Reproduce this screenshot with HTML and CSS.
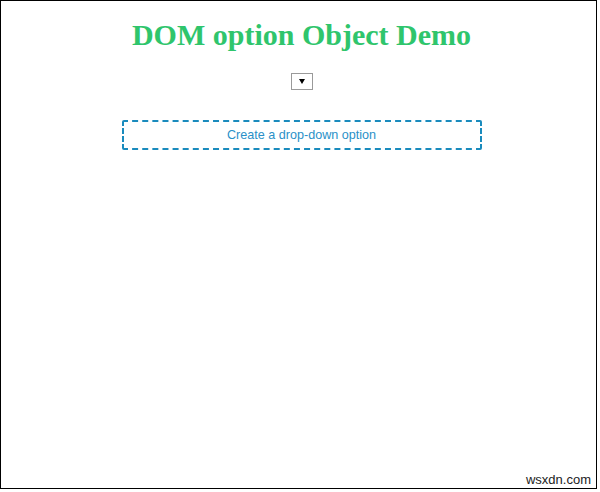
FILE: index.html
```html
<!DOCTYPE html>
<html>
<head>
<meta charset="utf-8">
<link rel="stylesheet" href="styles.css">
</head>
<body>
<div class="frame">
  <h1 class="title">DOM option Object Demo</h1>
  <div class="select-row">
    <span class="select-wrap"><select class="picker"></select></span>
  </div>
  <div class="btn-row">
    <button class="create-btn">Create a drop-down option</button>
  </div>
  <span class="watermark">wsxdn.com</span>
</div>
</body>
</html>
```

FILE: styles.css
```css
html, body {
  margin: 0;
  padding: 0;
  background: #fff;
}
.frame {
  position: relative;
  box-sizing: border-box;
  width: 597px;
  height: 489px;
  border: 1px solid #000;
  font-family: "Liberation Sans", Arial, sans-serif;
  display: flex;
  flex-direction: column;
  align-items: center;
}
.title {
  margin: 16px 0 0 6px;
  font-family: "Liberation Serif", "Times New Roman", serif;
  font-weight: bold;
  font-size: 30px;
  line-height: 35px;
  color: #2fc56c;
  text-align: center;
}
.select-row {
  margin-top: 21px;
  display: flex;
  justify-content: center;
  width: 100%;
}
.select-wrap {
  position: relative;
  display: inline-block;
  width: 22px;
  height: 17px;
  margin-left: 6px;
}
.picker {
  -webkit-appearance: none;
  appearance: none;
  box-sizing: border-box;
  width: 22px;
  height: 17px;
  margin: 0;
  padding: 0;
  border: 1px solid #9a9a9a;
  border-radius: 0;
  background: #fff;
  display: block;
}
.select-wrap::after {
  content: "";
  position: absolute;
  left: 8px;
  top: 6px;
  border-left: 3px solid transparent;
  border-right: 3px solid transparent;
  border-top: 5px solid #000;
  pointer-events: none;
}
.btn-row {
  margin-top: 30px;
  display: flex;
  justify-content: center;
  width: 100%;
}
.create-btn {
  box-sizing: border-box;
  width: 360px;
  height: 30px;
  margin-left: 6px;
  background: #fff;
  border: 2px dashed #1a8bbd;
  border-radius: 2px;
  color: #2a90c8;
  font-family: "Liberation Sans", Arial, sans-serif;
  font-size: 12.6px;
  padding: 0;
}
.watermark {
  position: absolute;
  right: 3px;
  bottom: 1px;
  background: #fff;
  color: #222;
  font-family: "Liberation Sans", Arial, sans-serif;
  font-size: 13px;
  line-height: 15px;
  padding: 0 2px;
}
```
